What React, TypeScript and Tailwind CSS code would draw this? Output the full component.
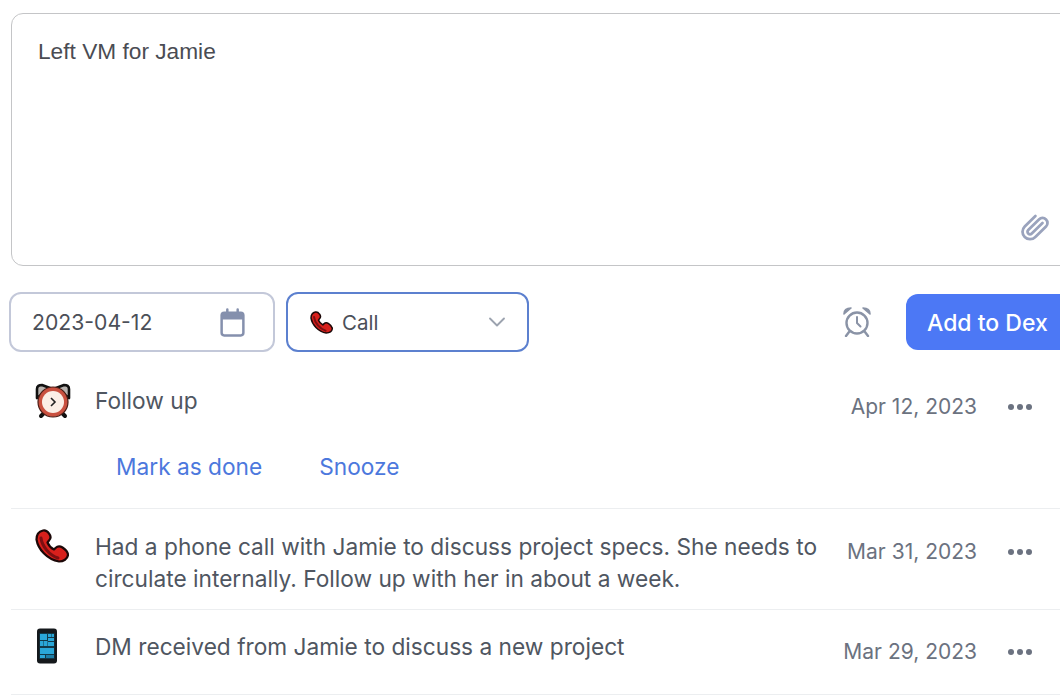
import { ChevronDown, Paperclip } from 'lucide-react'

function PhoneEmoji({ className }: { className: string }) {
  return (
    <svg viewBox="0 0 34 34" className={className}>
      <path
        d="M8 1.5 C3.5 2.5 1.5 6 1.5 10.5 C3 20 12 30.5 24 32.5 C28.5 32.5 32.5 30 33 26 C33 22.5 30.5 20.5 27.5 18.5 C24.5 16.5 22.5 17 20.5 19 L19 20.5 C16 19 13.5 16 12.5 13.5 L14 11.5 C16 9.5 16 7 14 4.5 C12 1.5 10.5 1 8 1.5 Z"
        fill="#d8201c"
        stroke="#1c0808"
        strokeWidth="2.2"
        strokeLinejoin="round"
      />
      <path d="M6 9 C7 17 14 26 23 29" fill="none" stroke="#7c0f12" strokeWidth="3" strokeLinecap="round" />
    </svg>
  )
}

function ClockEmoji({ className }: { className: string }) {
  return (
    <svg viewBox="0 0 36 36" className={className}>
      <path d="M2 15 L2 6 C2 3 4 2 7 2 L15 5 Z" fill="#b9b4b0" stroke="#111" strokeWidth="2.6" strokeLinejoin="round" />
      <path d="M34 15 L34 6 C34 3 32 2 29 2 L21 5 Z" fill="#b9b4b0" stroke="#111" strokeWidth="2.6" strokeLinejoin="round" />
      <path d="M8 31 L6 33 M28 31 L30 33" stroke="#111" strokeWidth="4" strokeLinecap="round" />
      <circle cx="18" cy="19" r="15" fill="#c9503f" stroke="#4a1c14" strokeWidth="1.2" />
      <circle cx="18" cy="19" r="11" fill="#fbeee6" />
      <path d="M16 15 L20 19 L16 23" fill="none" stroke="#222" strokeWidth="1.6" />
    </svg>
  )
}

function MobileEmoji({ className }: { className: string }) {
  return (
    <svg viewBox="0 0 22 36" className={className}>
      <rect x="1" y="0.5" width="20" height="35" rx="3" fill="#15191c" />
      <rect x="3.5" y="5" width="15" height="26" fill="#123a4a" />
      <rect x="4" y="6" width="7" height="6" fill="#2aa7d8" />
      <rect x="12" y="6" width="3" height="3" fill="#2aa7d8" />
      <rect x="15.5" y="6" width="2.5" height="3" fill="#2aa7d8" />
      <rect x="12" y="10" width="6" height="3" fill="#2aa7d8" />
      <rect x="4" y="13" width="3.5" height="5" fill="#2aa7d8" />
      <rect x="8" y="13" width="3.5" height="5" fill="#2aa7d8" />
      <rect x="12" y="14" width="6" height="4" fill="#2aa7d8" />
      <rect x="4" y="20" width="14" height="6" fill="#2aa7d8" />
      <rect x="4" y="27" width="5" height="3" fill="#2aa7d8" />
      <rect x="10" y="27" width="8" height="3" fill="#1d7ea6" />
    </svg>
  )
}

function CalendarIcon() {
  return (
    <svg viewBox="0 0 24 28" className="w-[25px] h-[29px]" fill="none">
      <rect x="1.5" y="4.5" width="21" height="22" rx="2.5" stroke="#8590ad" strokeWidth="2.4" />
      <path d="M1.5 7 a2.5 2.5 0 0 1 2.5 -2.5 h16 a2.5 2.5 0 0 1 2.5 2.5 v4 h-21 Z" fill="#8590ad" />
      <path d="M7 1.5 V6 M17 1.5 V6" stroke="#8590ad" strokeWidth="2.4" strokeLinecap="round" />
    </svg>
  )
}

function ReminderIcon() {
  return (
    <svg viewBox="0 0 28 30" className="w-[28px] h-[30px]" fill="none">
      <circle cx="14" cy="16" r="10.5" stroke="#8a93a6" strokeWidth="2.4" />
      <path d="M14 10 V16 L17.5 19.5" stroke="#8a93a6" strokeWidth="2" strokeLinecap="round" strokeLinejoin="round" />
      <path d="M1 7 C1 3 4 1 8 1 Z M27 7 C27 3 24 1 20 1 Z" fill="#8a93a6" stroke="#8a93a6" strokeWidth="1.6" strokeLinejoin="round" />
      <path d="M6 25 L3 29 M22 25 L25 29" stroke="#8a93a6" strokeWidth="2.4" strokeLinecap="round" />
    </svg>
  )
}

function Dots() {
  return (
    <div className="flex gap-[3px] w-[24px] shrink-0">
      <span className="w-[6px] h-[6px] rounded-full bg-[#6b7280]" />
      <span className="w-[6px] h-[6px] rounded-full bg-[#6b7280]" />
      <span className="w-[6px] h-[6px] rounded-full bg-[#6b7280]" />
    </div>
  )
}

export default function App() {
  return (
    <div className="w-[1060px] h-[698px] overflow-hidden bg-white text-[22.7px] text-[#4f5661] font-['Inter',sans-serif]">
      <div className="w-[1090px] pl-[11px] pt-[13px]">
        {/* Note box */}
        <div className="h-[253px] border border-[#c4c5c7] rounded-[12px] pl-[26px] pt-[21px] pr-[42px] flex flex-col justify-between pb-[22px]">
          <div className="font-['Liberation_Sans',sans-serif] text-[#4a4c53] leading-[32px]">Left VM for Jamie</div>
          <div className="flex justify-end mr-[-3px]">
            <Paperclip className="w-[30px] h-[30px] text-[#9aa3bd] scale-x-[-1] rotate-[90deg]" strokeWidth={2.2} />
          </div>
        </div>

        {/* Controls */}
        <div className="flex items-center mt-[26px] ml-[-2px] h-[60px]">
          <div className="w-[266px] h-[60px] border-2 border-[#c3c8d9] rounded-[12px] flex items-center justify-between pl-[21px] pr-[28px]">
            <span className="leading-none mt-[2px] text-[21.2px] text-[#4b4f58]">2023-04-12</span>
            <CalendarIcon />
          </div>
          <div className="w-[243px] h-[60px] ml-[11px] border-2 border-[#5c80cf] rounded-[12px] flex items-center pl-[22px] pr-[16px]">
            <PhoneEmoji className="w-[23px] h-[23px]" />
            <span className="ml-[9px] mt-[2px] text-[20.5px] text-[#4b4f58]">Call</span>
            <ChevronDown className="ml-auto w-[28px] h-[28px] text-[#9ca3af]" strokeWidth={1.6} />
          </div>
          <div className="ml-[314px] shrink-0"><ReminderIcon /></div>
          <button className="ml-[35px] w-[180px] h-[56px] rounded-[12px] bg-[#4c78f5] text-white text-[23px] font-medium text-left pl-[21px] pt-[2px]">
            Add to Dex
          </button>
        </div>

        {/* Timeline */}
        <div className="w-[1049px] pt-[5px]">
          <div className="h-[152px] border-b border-[#eceef0]">
            <div className="flex items-start pl-[24px] pt-[14px]">
              <ClockEmoji className="w-[36px] h-[36px] mt-[12px] shrink-0" />
              <span className="ml-[24px] mt-[14px] leading-[32px]">Follow up</span>
              <div className="ml-auto flex items-center mt-[20px] pr-[28px]">
                <span className="text-[21px] text-[#6b7280] leading-[32px]">Apr 12, 2023</span>
                <div className="ml-[31px]"><Dots /></div>
              </div>
            </div>
            <div className="flex pl-[105px] mt-[28px] leading-[32px] text-[#4c78dd]">
              <span>Mark as done</span>
              <span className="ml-[57px]">Snooze</span>
            </div>
          </div>

          <div className="h-[101px] border-b border-[#eceef0] flex items-start pl-[24px] pt-[20px]">
            <PhoneEmoji className="w-[34px] h-[34px] shrink-0" />
            <p className="ml-[26px] w-[740px] leading-[32px] mt-[2px]">
              Had a phone call with Jamie to discuss project specs. She needs to circulate internally. Follow up with her in about a week.
            </p>
            <div className="ml-auto flex items-center mt-[7px] pr-[28px]">
              <span className="text-[21px] text-[#6b7280] leading-[32px]">Mar 31, 2023</span>
              <div className="ml-[31px]"><Dots /></div>
            </div>
          </div>

          <div className="h-[85px] border-b border-[#eceef0] flex items-start pl-[24px] pt-[18px]">
            <MobileEmoji className="w-[22px] h-[36px] ml-[1px] shrink-0" />
            <p className="ml-[37px] leading-[32px] mt-[3px]">DM received from Jamie to discuss a new project</p>
            <div className="ml-auto flex items-center mt-[8px] pr-[28px]">
              <span className="text-[21px] text-[#6b7280] leading-[32px]">Mar 29, 2023</span>
              <div className="ml-[31px]"><Dots /></div>
            </div>
          </div>
        </div>
      </div>
    </div>
  )
}
